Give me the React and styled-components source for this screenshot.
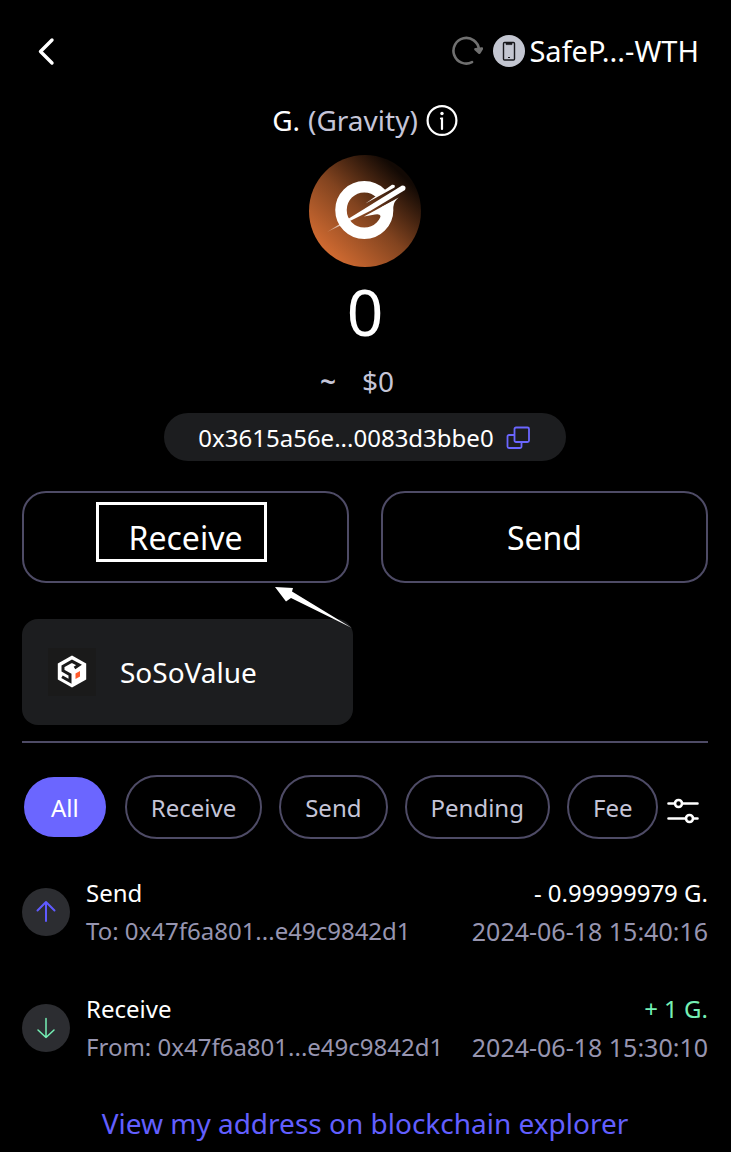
import styled, { createGlobalStyle } from "styled-components";

const colors = {
  bg: "#000000",
  panel: "#1c1d1f",
  badge: "#2c2d31",
  line: "#4e4b66",
  text: "#ffffff",
  soft: "#c5c5d8",
  muted: "#9795b0",
  primary: "#6b66ff",
  link: "#625fff",
  green: "#75f0b5",
};

const GlobalStyle = createGlobalStyle`
  * {
    box-sizing: border-box;
  }

  body {
    margin: 0;
    background: ${colors.bg};
    color: ${colors.text};
    font-family: "Noto Sans", "Open Sans", sans-serif;
  }

  button {
    margin: 0;
    padding: 0;
    border: 0;
    background: none;
    color: inherit;
    font: inherit;
    cursor: pointer;
  }

  svg {
    display: block;
    flex: none;
  }
`;

const Page = styled.main`
  padding: 0 23px 8px 22px;
`;

const Header = styled.header`
  display: flex;
  align-items: center;
  justify-content: space-between;
  height: 102px;
  padding: 0 9px 0 8px;
`;

const Wallet = styled.div`
  display: flex;
  align-items: center;
  gap: 4px;
  font-size: 29px;
  line-height: 32px;

  button + button {
    margin-left: 6px;
  }
`;

const WalletButton = styled.button`
  display: flex;
  align-items: center;
  gap: 4px;
`;

const Token = styled.section`
  display: flex;
  flex-direction: column;
  align-items: center;
`;

const Title = styled.h1`
  display: flex;
  align-items: center;
  gap: 8px;
  margin: 2px 0 19px;
  font-size: 28px;
  font-weight: 400;
  line-height: 32px;

  span {
    color: ${colors.soft};
  }
`;

const Balance = styled.div`
  margin-top: 13px;
  font-size: 64px;
  line-height: 64px;
`;

const Fiat = styled.div`
  display: flex;
  gap: 26px;
  margin-top: 21px;
  padding-right: 16px;
  color: ${colors.soft};
  font-size: 28px;
  line-height: 32px;
`;

const Approx = styled.span`
  font-weight: 600;
`;

const Address = styled.button`
  && {
    display: flex;
    align-items: center;
    gap: 12px;
    height: 48px;
    margin-top: 16px;
    padding: 0 36px 0 34px;
    border-radius: 24px;
    background: ${colors.panel};
    font-size: 24px;
  }
`;

const Actions = styled.div`
  position: relative;
  display: grid;
  grid-template-columns: 1fr 1fr;
  gap: 32px;
  margin-top: 30px;
`;

const ActionButton = styled.button`
  && {
    height: 92px;
    border: 2px solid ${colors.line};
    border-radius: 24px;
    font-size: 32px;
  }
`;

const Highlight = styled.div`
  position: absolute;
  top: 11px;
  left: 74px;
  width: 171px;
  height: 60px;
  border: 3px solid ${colors.text};
  pointer-events: none;
`;

const Pointer = styled.svg`
  position: absolute;
  top: 95px;
  left: 252px;
  pointer-events: none;
`;

const Dapps = styled.div`
  display: grid;
  grid-template-columns: 1fr 1fr;
  gap: 24px;
  margin-top: 36px;
  padding-bottom: 16px;
  border-bottom: 2px solid ${colors.line};
`;

const DappCard = styled.button`
  && {
    display: flex;
    align-items: center;
    gap: 24px;
    height: 106px;
    padding: 0 26px;
    border-radius: 16px;
    background: ${colors.panel};
    font-size: 28px;
  }
`;

const Filters = styled.nav`
  display: flex;
  align-items: center;
  gap: 17px;
  margin-top: 32px;
`;

const Chip = styled.button`
  && {
    height: 64px;
    padding: 0 ${(props) => (props.$active ? 27 : 24)}px;
    border: 2px solid ${(props) => (props.$active ? "transparent" : colors.line)};
    border-radius: 32px;
    background: ${(props) => (props.$active ? colors.primary : "transparent")};
    background-clip: padding-box;
    color: ${(props) => (props.$active ? colors.text : colors.soft)};
    font-size: 24px;
  }
`;

const FilterButton = styled.button`
  && {
    margin: 8px 0 0 -8px;
  }
`;

const History = styled.ul`
  display: flex;
  flex-direction: column;
  gap: 40px;
  margin: 35px 0 0;
  padding: 0;
  list-style: none;
`;

const Row = styled.li`
  display: flex;
  align-items: center;
  gap: 16px;
`;

const Badge = styled.div`
  display: flex;
  align-items: center;
  justify-content: center;
  width: 48px;
  height: 48px;
  flex: none;
  border-radius: 50%;
  background: ${colors.badge};
`;

const Details = styled.div`
  flex: 1;
  font-size: 24px;
  line-height: 38px;
`;

const Line = styled.div`
  display: flex;
  justify-content: space-between;
  color: ${(props) => (props.$muted ? colors.muted : colors.text)};
  white-space: nowrap;
`;

const Amount = styled.span`
  color: ${(props) => (props.$incoming ? colors.green : colors.text)};
`;

const Time = styled.time`
  font-size: 25px;
`;

const ExplorerLink = styled.a`
  display: block;
  margin-top: 38px;
  color: ${colors.link};
  font-size: 28px;
  line-height: 38px;
  text-align: center;
  text-decoration: none;
`;

const BackIcon = () => (
  <svg width="32" height="32" viewBox="0 0 32 32" fill="none" stroke="#fff" strokeWidth="3.4" strokeLinecap="round" strokeLinejoin="round">
    <path d="M22 5 10.500 16.500 22 28" />
  </svg>
);

const RefreshIcon = () => (
  <svg width="32" height="32" viewBox="0 0 32 32" fill="none" stroke="#707070" strokeWidth="2.6" strokeLinecap="round" strokeLinejoin="round">
    <path d="M21 27.200A12.800 12.800 0 1 1 28 14.500" />
    <path d="m24.500 14.300 3.800 3.400 2.700-4.200z" fill="#707070" />
  </svg>
);

const PhoneIcon = () => (
  <svg width="32" height="32" viewBox="0 0 32 32" fill="none">
    <circle cx="16" cy="16" r="16" fill="#c3c6d1" />
    <rect x="10.500" y="7.500" width="11" height="17.500" rx="1" stroke="#17181c" strokeWidth="1.400" />
    <path d="M13 8h6v1.600h-6z" fill="#17181c" stroke="#17181c" strokeWidth=".6" />
    <path d="M15 22.500h2" stroke="#17181c" strokeWidth="1.200" />
  </svg>
);

const InfoIcon = () => (
  <svg width="32" height="32" viewBox="0 0 32 32" fill="none" stroke="#fff" strokeLinecap="round">
    <circle cx="16" cy="16.500" r="14.400" strokeWidth="2.200" />
    <circle cx="16" cy="9.500" r="1.700" fill="#fff" stroke="none" />
    <path d="M15 14.500h1v10.500" strokeWidth="2.200" />
  </svg>
);

const CopyIcon = () => (
  <svg width="24" height="24" viewBox="0 0 24 24" fill="none" stroke={colors.primary} strokeWidth="1.800" strokeLinejoin="round">
    <rect x="8.500" y="2.500" width="14.500" height="14.500" rx="1.500" />
    <path d="M8.500 10H3A1.500 1.500 0 0 0 1.500 11.500v10A1.500 1.500 0 0 0 3 23h11a1.500 1.500 0 0 0 1.500-1.500V17" />
  </svg>
);

const SlidersIcon = () => (
  <svg width="32" height="28" viewBox="0 0 32 28" fill="none" stroke="#fff" strokeWidth="2.600" strokeLinecap="round">
    <path d="M1.500 6.500h6M15.500 6.500h15M1.500 21.500h17M26.500 21.500h4" />
    <circle cx="11.500" cy="6.500" r="3.500" />
    <circle cx="22.500" cy="21.500" r="3.500" />
  </svg>
);

const ArrowUp = () => (
  <svg width="24" height="24" viewBox="0 0 24 24" fill="none" stroke="#5f5aff" strokeWidth="2" strokeLinecap="round" strokeLinejoin="round">
    <path d="M12 21V2M3.500 10.500 12 2l8.500 8.500" />
  </svg>
);

const ArrowDown = () => (
  <svg width="24" height="24" viewBox="0 0 24 24" fill="none" stroke={colors.green} strokeWidth="1.500" strokeLinecap="round" strokeLinejoin="round">
    <path d="M12 2.500v19M4 14l8 7.500 8-7.500" />
  </svg>
);

const GravityLogo = () => (
  <svg width="112" height="112" viewBox="0 0 112 112">
    <defs>
      <linearGradient id="gravity-bg" x1="0.150" y1="0.850" x2="0.800" y2="0.150">
        <stop offset="0" stopColor="#cf6a31" />
        <stop offset="0.500" stopColor="#81431f" />
        <stop offset="1" stopColor="#120904" />
      </linearGradient>
      <linearGradient id="gravity-tail" x1="18" y1="77" x2="42" y2="62" gradientUnits="userSpaceOnUse">
        <stop offset="0" stopColor="#fff" stopOpacity="0.300" />
        <stop offset="1" stopColor="#fff" />
      </linearGradient>
      <mask id="gravity-cut" maskUnits="userSpaceOnUse" x="0" y="0" width="112" height="112">
        <rect width="112" height="112" fill="#fff" />
        <path d="M56 49 92 25 108 38 84 46 54 62z" fill="#000" />
      </mask>
    </defs>
    <circle cx="56" cy="56" r="56" fill="url(#gravity-bg)" />
    <g mask="url(#gravity-cut)">
      <circle cx="55.300" cy="55" r="23.300" fill="none" stroke="#fff" strokeWidth="11.500" />
    </g>
    <path d="M56.500 48.500 83 29.800Q87 29.500 85.500 32.500z" fill="#fff" />
    <path d="M18 77 93 30.500Q98 30.500 96 35L62 55.500 45 64z" fill="url(#gravity-tail)" />
    <path d="M55 61.500 89.700 42.500Q85 46 84.300 52L83 62 71 66Q74 58 66 59.500z" fill="#fff" />
  </svg>
);

const SosoLogo = () => (
  <svg width="48" height="48" viewBox="0 0 48 48">
    <rect width="48" height="48" fill="#1a1a1a" />
    <path d="M24 7.500 38.200 15.500v16L24 39.500 9.800 31.500v-16z" fill="#fff" />
    <path d="M26.500 20 31 17l-7-3.700-9 5v4.400l7 4v6.600l-8-4.500" fill="none" stroke="#1a1a1a" strokeWidth="3" />
    <path d="m27.500 25.500 4.500-2.500v5.500l-4.500 2.500z" fill="#ff5a2b" />
  </svg>
);

const filters = ["All", "Receive", "Send", "Pending", "Fee"];

const transactions = [
  {
    type: "Send",
    amount: "- 0.99999979 G.",
    party: "To: 0x47f6a801...e49c9842d1",
    date: "2024-06-18 15:40:16",
  },
  {
    type: "Receive",
    amount: "+ 1 G.",
    party: "From: 0x47f6a801...e49c9842d1",
    date: "2024-06-18 15:30:10",
    incoming: true,
  },
];

const Transaction = ({ type, amount, party, date, incoming }) => (
  <Row>
    <Badge>{incoming ? <ArrowDown /> : <ArrowUp />}</Badge>
    <Details>
      <Line>
        <span>{type}</span>
        <Amount $incoming={incoming}>{amount}</Amount>
      </Line>
      <Line $muted>
        <span>{party}</span>
        <Time>{date}</Time>
      </Line>
    </Details>
  </Row>
);

const App = () => (
  <>
    <GlobalStyle />
    <Page>
      <Header>
        <button type="button" aria-label="Back">
          <BackIcon />
        </button>
        <Wallet>
          <button type="button" aria-label="Refresh">
            <RefreshIcon />
          </button>
          <WalletButton type="button">
            <PhoneIcon />
            SafeP...-WTH
          </WalletButton>
        </Wallet>
      </Header>

      <Token>
        <Title>
          G. <span>(Gravity)</span>
          <InfoIcon />
        </Title>
        <GravityLogo />
        <Balance>0</Balance>
        <Fiat>
          <Approx>~</Approx>
          <span>$0</span>
        </Fiat>
        <Address type="button">
          0x3615a56e...0083d3bbe0
          <CopyIcon />
        </Address>
      </Token>

      <Actions>
        <ActionButton type="button">Receive</ActionButton>
        <ActionButton type="button">Send</ActionButton>
        <Highlight />
        <Pointer width="80" height="44" viewBox="0 0 80 44">
          <path d="M1 1 19 2 18 5.500 78 42 17 12 12 15.500z" fill="#fff" />
        </Pointer>
      </Actions>

      <Dapps>
        <DappCard type="button">
          <SosoLogo />
          SoSoValue
        </DappCard>
      </Dapps>

      <Filters>
        {filters.map((name, index) => (
          <Chip key={name} type="button" $active={index === 0}>
            {name}
          </Chip>
        ))}
        <FilterButton type="button" aria-label="Filter">
          <SlidersIcon />
        </FilterButton>
      </Filters>

      <History>
        {transactions.map((item) => (
          <Transaction key={item.date} {...item} />
        ))}
      </History>

      <ExplorerLink href="#explorer">View my address on blockchain explorer</ExplorerLink>
    </Page>
  </>
);

export default App;
